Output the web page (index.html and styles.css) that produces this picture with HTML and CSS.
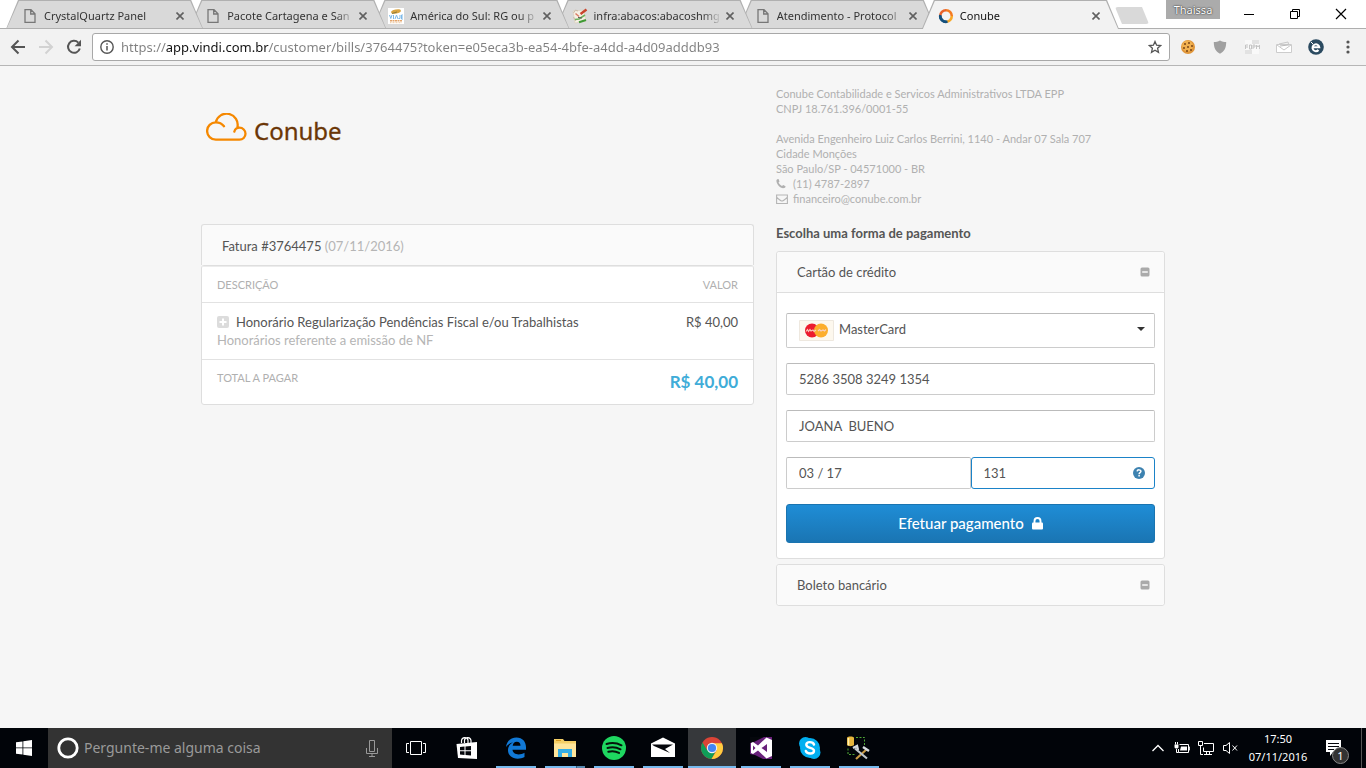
FILE: index.html
```html
<!DOCTYPE html>
<html lang="pt-BR">
<head>
<meta charset="utf-8">
<meta name="viewport" content="width=device-width, initial-scale=1">
<title>Conube</title>
<link rel="stylesheet" href="styles.css">
</head>
<body>
<svg class="sprite" aria-hidden="true">
  <symbol id="doc" viewBox="0 0 12 14"><path d="M1 .7h6l4 4v8.6H1zM6.700 1v4H11" fill="none" stroke="#777" stroke-width="1.300"/></symbol>
  <symbol id="close" viewBox="0 0 8 8"><path d="M.5.5l7 7M7.500.5l-7 7" fill="none" stroke="#606060" stroke-width="1.600"/></symbol>
  <symbol id="minus" viewBox="0 0 10 10"><rect x=".5" y=".5" width="9" height="9" rx="1.500" fill="#aaa"/><path d="M2.200 5h5.600" stroke="#fff" stroke-width="1.400"/></symbol>
</svg>

<header class="browser">
  <div class="strip">
    <nav class="tabs" aria-label="Abas">
      <div class="tab"><svg class="fav" aria-hidden="true"><use href="#doc"/></svg><span class="tab-title">CrystalQuartz Panel</span><button class="tab-close" aria-label="Fechar"><svg><use href="#close"/></svg></button></div>
      <div class="tab"><svg class="fav" aria-hidden="true"><use href="#doc"/></svg><span class="tab-title">Pacote Cartagena e San</span><button class="tab-close" aria-label="Fechar"><svg><use href="#close"/></svg></button></div>
      <div class="tab"><svg class="fav" viewBox="0 0 16 16" aria-hidden="true"><path fill="#fff" d="M0 0h16v16H0z"/><ellipse cx="8" cy="3.500" rx="5" ry="2" fill="#d9a441" transform="rotate(-12 8 3.500)"/><path d="M4 5.500l5-1.500" stroke="#8b7a3a"/><path d="M1.500 7l1.300 3.500L4 7M5.500 7v4M7 11l1.500-4L10 11M12 7v3.500h-1.500M15 7h-1.500v4H15M13.500 9H15" fill="none" stroke="#7db9e8"/><path d="M2 12.700h12" stroke="#e3a46a" stroke-width="1.500" stroke-dasharray="2 .5"/><path d="M2 14.700h12" stroke="#eec9a0" stroke-dasharray="1 .5"/></svg><span class="tab-title">América do Sul: RG ou p</span><button class="tab-close" aria-label="Fechar"><svg><use href="#close"/></svg></button></div>
      <div class="tab"><svg class="fav" viewBox="0 0 16 16" aria-hidden="true"><path fill="#f6f0e4" stroke="#d8cdb8" stroke-width=".6" d="M1 3l11-1 2 11-11 2z"/><path d="M1.500 5l2-3 2.500 1M1.500 9l2 4" fill="none" stroke="#cba"/><path d="M14.500 1.500L8.500 6" stroke="#c8442c" stroke-width="2.400"/><path d="M3.500 5.500l3.500 3" stroke="#d97a64" stroke-width="1.500"/><path d="M3 11.500l4-.5 6-4" fill="none" stroke="#6fb35f" stroke-width="1.600"/><path d="M7 14.300l7-2.300" stroke="#3f9a34" stroke-width="2"/><path d="M6 9.500l4 .5" stroke="#555"/></svg><span class="tab-title">infra:abacos:abacoshmg</span><button class="tab-close" aria-label="Fechar"><svg><use href="#close"/></svg></button></div>
      <div class="tab"><svg class="fav" aria-hidden="true"><use href="#doc"/></svg><span class="tab-title">Atendimento - Protocol</span><button class="tab-close" aria-label="Fechar"><svg><use href="#close"/></svg></button></div>
      <div class="tab tab-active"><svg class="fav" viewBox="0 0 16 16" aria-hidden="true"><g fill="none" stroke-width="2.600"><path d="M8 2.200a5.800 5.800 0 0 1 5.800 5.800" stroke="#f47b20"/><path d="M13.800 8A5.800 5.800 0 0 1 8 13.800" stroke="#f9a825"/><path d="M8 13.800A5.800 5.800 0 0 1 2.200 8" stroke="#14507d"/><path d="M2.200 8A5.800 5.800 0 0 1 8 2.200" stroke="#e8622a"/><path d="M2.300 7a5.800 5.800 0 0 0 7.200 6.600" stroke="#14507d"/></g></svg><span class="tab-title">Conube</span><button class="tab-close" aria-label="Fechar"><svg><use href="#close"/></svg></button></div>
    </nav>
    <button class="new-tab" aria-label="Nova aba"></button>
    <button class="profile">Thaissa</button>
    <div class="window-buttons">
      <button aria-label="Minimizar"><svg viewBox="0 0 12 12"><path d="M1 6.500h10" stroke="#000"/></svg></button>
      <button aria-label="Restaurar"><svg viewBox="0 0 12 12"><path d="M1.500 3.500h7v7h-7zM3.500 3.500v-2h7v7h-2" fill="none" stroke="#000"/></svg></button>
      <button aria-label="Fechar janela"><svg viewBox="0 0 12 12"><path d="M1 1l10 10M11 1L1 11" stroke="#000" stroke-width="1.200"/></svg></button>
    </div>
  </div>
  <div class="toolbar">
    <div class="nav-buttons">
      <button aria-label="Voltar"><svg viewBox="0 0 16 16"><path d="M15 8H2.500M8.500 1.500L2 8l6.500 6.500" fill="none" stroke="#555" stroke-width="2"/></svg></button>
      <button aria-label="Avançar"><svg viewBox="0 0 16 16"><path d="M1 8h12.500M7.500 1.500L14 8l-6.500 6.500" fill="none" stroke="#d2d2d2" stroke-width="2"/></svg></button>
      <button aria-label="Recarregar"><svg viewBox="0 0 16 16"><path d="M13.800 9.500A6 6 0 1 1 12.300 3.600" fill="none" stroke="#555" stroke-width="2"/><path d="M15 .8v6.400H8.600z" fill="#555"/></svg></button>
    </div>
    <div class="omnibox">
      <svg class="info" viewBox="0 0 14 14" aria-hidden="true"><circle cx="7" cy="7" r="6.200" fill="none" stroke="#555" stroke-width="1.400"/><path d="M7 6v4.500M7 3.300v1.500" stroke="#555" stroke-width="1.500"/></svg>
      <input class="url" type="text" aria-label="Endereço" value="https://app.vindi.com.br/customer/bills/3764475?token=e05eca3b-ea54-4bfe-a4dd-a4d09adddb93">
      <button class="star" aria-label="Favorito"><svg viewBox="0 0 14 14"><path d="M7 1.500l1.600 3.700 4 .4-3 2.700.9 4L7 10.200l-3.500 2.100.9-4-3-2.700 4-.4z" fill="none" stroke="#555" stroke-width="1.300"/></svg></button>
    </div>
    <div class="extensions">
      <button aria-label="Cookies"><svg viewBox="0 0 16 16"><circle cx="8" cy="8" r="7" fill="#e0963a"/><circle cx="7.500" cy="7" r="5.500" fill="#f0b050"/><g fill="#7a4416"><circle cx="5" cy="5" r="1"/><circle cx="9" cy="4" r="1"/><circle cx="12" cy="7" r="1"/><circle cx="8" cy="8" r="1"/><circle cx="4" cy="9" r="1"/><circle cx="7" cy="12" r="1"/><circle cx="11" cy="11" r="1"/></g></svg></button>
      <button aria-label="Proteção"><svg viewBox="0 0 16 16"><path d="M8 1.500c2 1.200 4 1.500 6.200 1.600C14.200 9 12.500 12.500 8 14.700 3.500 12.500 1.800 9 1.800 3.100 4 3 6 2.700 8 1.500z" fill="#a0a0a0"/></svg></button>
      <button aria-label="Formulário"><svg viewBox="0 0 16 16"><path fill="#f9f9f9" d="M1 1h14v14H1z"/><path fill="#e2e2e2" d="M8 1h7v4H8zM1 11h7v4H1z"/><path d="M1.500 10V6H4M1.500 8H4M5.500 6h2v4h-2zM9 10V6h2v2H9M12.500 10V6L14 8l1.500-2v4" fill="none" stroke="#c4c4c4"/></svg></button>
      <button aria-label="Correio"><svg viewBox="0 0 16 16"><path d="M.5 5.500h15v8H.5z" fill="#fff" stroke="#ccc"/><path d="M1 6l7 5 7-5M3 5l9-2 1 4" fill="none" stroke="#c8c8c8"/><path d="M4 7l8-1" stroke="#bbb"/></svg></button>
      <button aria-label="E"><svg viewBox="0 0 16 16"><circle cx="8" cy="8" r="7.800" fill="#2b4a60"/><path d="M4.500 8.300h6.800A3.400 3.400 0 1 0 10.500 11" fill="none" stroke="#fff" stroke-width="2"/><path d="M3 3l2 2" stroke="#fff"/></svg></button>
      <button aria-label="Menu"><svg viewBox="0 0 16 16" fill="#555"><circle cx="8" cy="3" r="1.600"/><circle cx="8" cy="8" r="1.600"/><circle cx="8" cy="13" r="1.600"/></svg></button>
    </div>
  </div>
</header>

<main class="page">
  <div class="layout">
    <section class="bill">
      <div class="logo">
        <svg viewBox="0 0 41 29" role="img" aria-label="Nuvem"><path d="M9.800 9.300A11 11 0 0 1 31.400 14.200M18 13.200C15.500 10 12.700 9.300 9.800 9.300A8.700 8.700 0 0 0 9.800 26.700H33.500a6 6 0 0 0 0-12c-2.500 0-4.500 1.400-5.200 4" fill="none" stroke="#f58800" stroke-width="2.300" stroke-linecap="round"/></svg>
        <span>Conube</span>
      </div>
      <table class="invoice">
        <caption>Fatura #3764475 <span class="muted">(07/11/2016)</span></caption>
        <thead><tr><th scope="col">DESCRIÇÃO</th><th scope="col">VALOR</th></tr></thead>
        <tbody><tr>
          <td><div class="item"><svg viewBox="0 0 12 12" aria-hidden="true"><rect width="12" height="12" rx="2" fill="#dcdcdc"/><path d="M2.500 6h7M6 2.500v7" stroke="#fff" stroke-width="2"/></svg>Honorário Regularização Pendências Fiscal e/ou Trabalhistas</div><div class="muted">Honorários referente a emissão de NF</div></td>
          <td>R$ 40,00</td>
        </tr></tbody>
        <tfoot><tr><th scope="row">TOTAL A PAGAR</th><td>R$ 40,00</td></tr></tfoot>
      </table>
    </section>

    <section class="payment">
      <address class="company">
        Conube Contabilidade e Servicos Administrativos LTDA EPP<br>CNPJ 18.761.396/0001-55<br><br>Avenida Engenheiro Luiz Carlos Berrini, 1140 - Andar 07 Sala 707<br>Cidade Monções<br>São Paulo/SP - 04571000 - BR
        <div class="contact"><svg viewBox="0 0 12 12" aria-hidden="true"><path d="M.5 2C1 1.100 2 .8 2.500 1L3.500 3.500 2.500 4.600c.7 1.500 1.900 2.700 3.500 3.500l1.200-1.100 2.300 1.300c.1.500-.4 1.500-1.200 1.800C4.300 11 -.2 6 .5 2z" fill="#b0b0b0"/></svg>(11) 4787-2897</div>
        <div class="contact"><svg viewBox="0 0 12 12" aria-hidden="true"><path d="M.6 2h10.800v8.500H.6zM.8 4.500C3 6.500 5 8 6 8s3-1.500 5.200-3.500" fill="none" stroke="#b5b5b5" stroke-width="1.100"/></svg>financeiro@conube.com.br</div>
      </address>
      <h1>Escolha uma forma de pagamento</h1>

      <div class="panel">
        <button class="panel-head" type="button" aria-expanded="true">Cartão de crédito<svg aria-hidden="true"><use href="#minus"/></svg></button>
        <form class="panel-body">
          <div class="brand">
            <select aria-label="Bandeira"><option>MasterCard</option></select>
            <svg class="brand-card" viewBox="0 0 35 21" aria-hidden="true"><path d="M.5.5h34v20H.5z" fill="#fdf8ee" stroke="#eee8df"/><circle cx="13" cy="10.500" r="7" fill="#ec1c2e"/><circle cx="22" cy="10.500" r="7" fill="#fcae2c"/><path d="M7 11.500l1.500-2 1 2 1.500-2 1 1.500 2-1 1 1.500 2-1.500M19 11l1.500-1.500 1.500 1.500 2-1 1.500 1 1.500-1.500" fill="none" stroke="#f8cfc0" stroke-width="1.100"/></svg>
            <svg class="caret" viewBox="0 0 8 4" aria-hidden="true"><path d="M0 0h8L4 4z" fill="#333"/></svg>
          </div>
          <input class="field" type="text" aria-label="Número do cartão" value="5286 3508 3249 1354">
          <input class="field" type="text" aria-label="Nome no cartão" value="JOANA  BUENO">
          <div class="pair">
            <input class="field" type="text" aria-label="Validade" value="03 / 17">
            <div class="cvv">
              <input class="field field-focus" type="text" aria-label="Código de segurança" value="131">
              <svg viewBox="0 0 12 12" aria-hidden="true"><circle cx="6" cy="6" r="6" fill="#3d82b0"/><path d="M4.100 4.400C4.300 2.300 8 2.400 7.900 4.500 7.800 5.700 6.100 5.700 6.100 7.200M6.100 8.100v1.500" fill="none" stroke="#fff" stroke-width="1.500"/></svg>
            </div>
          </div>
          <button class="pay" type="button">Efetuar pagamento<svg viewBox="0 0 11 13" aria-hidden="true"><path d="M2.500 6V4a3 3 0 0 1 6 0v2" fill="none" stroke="#fff" stroke-width="1.900"/><rect y="5.500" width="11" height="7" rx="1" fill="#fff"/></svg></button>
        </form>
      </div>
      <div class="panel">
        <button class="panel-head" type="button" aria-expanded="false">Boleto bancário<svg aria-hidden="true"><use href="#minus"/></svg></button>
      </div>
    </section>
  </div>
</main>

<footer class="taskbar">
  <button class="start" aria-label="Iniciar"><svg viewBox="0 0 16 16"><path fill="#fff" d="M0 2.300L6.500 1.400v6.100H0zM7.300 1.300L16 0v7.500H7.300zM0 8.300h6.500v6.300L0 13.700zM7.300 8.300H16V16l-8.700-1.300z"/></svg></button>
  <label class="search">
    <svg class="cortana" viewBox="0 0 22 22" aria-hidden="true"><circle cx="11" cy="11" r="9.200" fill="none" stroke="#fff" stroke-width="2.800"/></svg>
    <input type="text" aria-label="Pesquisar" placeholder="Pergunte-me alguma coisa">
    <svg class="mic" viewBox="0 0 12 17" aria-hidden="true"><path d="M3.500.5h5v11h-5zM.5 8v5.500h11V8M6 13.500v3M3 16.500h6" fill="none" stroke="#999"/></svg>
  </label>
  <button class="taskview" aria-label="Visão de tarefas"><svg viewBox="0 0 20 14"><path d="M4.500.5h11v13h-11zM3 2.500H.5v9H3M17 2.500h2.500v9H17" fill="none" stroke="#fff"/></svg></button>
  <nav class="apps" aria-label="Aplicativos">
    <button aria-label="Loja"><svg viewBox="0 0 24 24"><path d="M6.500 7V4.500C7 1 12 .5 13 4v3M9.500 7V4C10.500.5 15.500 1 16 4.500V7" fill="none" stroke="#fff" stroke-width="1.200"/><path d="M1.500 8L22 6v17L3 22z" fill="#fff"/><path fill="#05070c" d="M5 11l4.500-.4v3.700H5zM10.500 10.500L16 10v4.300h-5.500zM5 15.300h4.500V19L5 18.500zM10.500 15.300H16v4.300l-5.500-.5z"/></svg></button>
    <button class="running" aria-label="Edge"><svg viewBox="0 0 24 24"><path d="M2 11C3 4.500 7.500 1.500 12.500 1.500c6 0 9.500 4.300 9.500 9.700v2.600H8.500c.2 3.200 3 4.600 6 4.600 2.200 0 4.200-.6 6-1.700V21c-2 1.200-4.400 1.700-6.800 1.700C8 22.700 4 19.300 4 14.300c0-3.500 1.800-6.300 5-8C5.900 7 3.600 8.600 2 11zm6.700-1.300h7.800c0-2.500-1.300-3.900-3.700-3.900-2.300 0-3.700 1.600-4.100 3.900z" fill="#1179d6"/></svg></button>
    <button class="running stacked" aria-label="Explorador"><svg viewBox="0 0 24 24"><path d="M1 3h9l1.500 2H23v16H1z" fill="#f5cf66"/><path d="M1 7.500h22V21H1z" fill="#ffe59a"/><path d="M3 4.500h5" stroke="#d89b22"/><path d="M5 13h14v8h-4v-4H9v4H5z" fill="#35aee5"/></svg></button>
    <button class="running" aria-label="Spotify"><svg viewBox="0 0 24 24"><circle cx="12" cy="12" r="12" fill="#1ed760"/><path d="M4.500 8c5-1.500 10.500-1 15 1.300M5.500 12c4.500-1.300 9-.8 13 1.300M6.300 15.700c3.800-1 7.500-.6 10.700 1.200" fill="none" stroke="#05150b" stroke-width="2" stroke-linecap="round"/></svg></button>
    <button class="running" aria-label="E-mail"><svg viewBox="0 0 24 24"><path d="M0 7.500L12 1.500l12 6V21H0z" fill="#fff"/><path d="M1 8.500h21l-8 4.500 5 4L3 10z" fill="#05070c"/></svg></button>
    <button class="running current" aria-label="Chrome"><svg viewBox="0 0 24 24"><circle cx="12" cy="12" r="11" fill="#db4437"/><path d="M2.500 6.500A11 11 0 0 0 11.500 23l4.700-8.500L7 14z" fill="#0f9d58"/><path d="M11.500 23A11 11 0 0 0 21.900 7.200H12l4.800 7z" fill="#ffcd40"/><circle cx="12" cy="12" r="5.200" fill="#f1f1f1"/><circle cx="12" cy="12" r="4.100" fill="#4285f4"/></svg></button>
    <button class="running" aria-label="Visual Studio"><svg viewBox="0 0 24 24"><path d="M1 1h22v22H1z" fill="#68217a"/><path d="M1 1h14L5 6 1 7zM1 18l5 1 8 4H1z" fill="#05070c"/><path d="M17.500 1.500L23 4v16l-5.500 2.500L9 14.500 4 18l-2-1V7l2-1 5 3.500zM18 8l-5.500 4 5.500 4zM4 9.500v5L6.500 12z" fill="#fff" fill-rule="evenodd"/></svg></button>
    <button class="running" aria-label="Skype"><svg viewBox="0 0 24 24"><circle cx="7.500" cy="7.500" r="6.500" fill="#00aff0"/><circle cx="16" cy="16.500" r="6.500" fill="#00aff0"/><circle cx="12" cy="12" r="10" fill="#00aff0"/><path d="M16 8.500C15 5.500 8.500 5.200 8.300 8.700c-.1 3.800 7.700 2.500 7.700 6 0 3.700-7.300 3.500-8.200.2" fill="none" stroke="#fff" stroke-width="2.400" stroke-linecap="round"/></svg></button>
    <button class="running" aria-label="Ferramentas"><svg viewBox="0 0 24 24"><path d="M0 1.500C1 0 6 0 7 1.500V9c-1 1.500-6 1.500-7 0z" fill="#e6b53c"/><path d="M1.500 2v7.500" stroke="#fff0b0" stroke-width="1.500"/><path d="M9 1.500h8.500v8M1 12.500v6h7" fill="none" stroke="#4fa836" stroke-dasharray="2 1.500"/><path d="M20 13L9 23" stroke="#c99a45" stroke-width="2.200"/><path d="M8 12.500l12 10" stroke="#bfc6cc" stroke-width="2.200"/><path d="M6 12l4-2 1 4M16 11l6 4" fill="none" stroke="#d5dade" stroke-width="2.400"/></svg></button>
  </nav>
  <div class="tray">
    <button aria-label="Ícones ocultos"><svg viewBox="0 0 16 16"><path d="M2.500 11L8 5.500l5.500 5.500" fill="none" stroke="#fff" stroke-width="1.300"/></svg></button>
    <button aria-label="Bateria"><svg viewBox="0 0 16 16"><path d="M5.500 4.500h9v8h-10V9M14.500 7h1.200v3h-1.200M2.500 9v3.500h2M1.500 2v2.500M3.500 2v2.500" fill="none" stroke="#fff"/><path d="M.5 4.500h4v3l-1 1h-2l-1-1zM7 6.500h6v4H6z" fill="#fff"/></svg></button>
    <button aria-label="Rede"><svg viewBox="0 0 16 16"><path d="M6 3.500h9.500v8h-10v-4M8.500 11.500v3M11.500 11.500v3M6 14.500h8M.5 1.500h4v4h-4zM2.500 5.500v9H5" fill="none" stroke="#fff"/></svg></button>
    <button aria-label="Volume"><svg viewBox="0 0 16 16"><path d="M1.500 5.500H4L7.500 2.500v11L4 10.500H1.500zM10.500 5.500l4.500 5M15 5.500l-4.500 5" fill="none" stroke="#fff"/></svg></button>
    <time class="clock" datetime="2016-11-07T17:50">17:50<br>07/11/2016</time>
    <button class="notify" aria-label="Notificações"><svg viewBox="0 0 18 18"><path d="M1 1h15v12H8l-3 4v-4H1z" fill="#fff"/><path d="M3 4.500h11M3 7.500h11M3 10.500h6" stroke="#05070c"/></svg><span class="badge">1</span></button>
  </div>
</footer>
</body>
</html>
```
FILE: styles.css
```css
* { box-sizing: border-box; }

body {
  margin: 0;
  min-height: 100vh;
  display: flex;
  flex-direction: column;
  background: #f6f6f6;
  color: #555;
  font: 13px/18px Lato, "Liberation Sans", sans-serif;
}

button, input, select { font: inherit; color: inherit; }
button { margin: 0; padding: 0; border: 0; background: none; cursor: pointer; }
svg { display: block; flex: none; }
.sprite { position: absolute; width: 0; height: 0; }
.muted { color: #b5b5b5; }

/* Browser window */
.browser { font-family: "Noto Sans", "Open Sans", sans-serif; }
.strip {
  display: flex;
  height: 29px;
  padding: 0 2px 0 6px;
  background: linear-gradient(#fff 28px, #aeaeae 28px);
}
.tabs { display: flex; flex: 0 1 1113px; min-width: 0; }
.tab {
  position: relative;
  z-index: 0;
  flex: 1 1 0;
  min-width: 0;
  display: flex;
  align-items: center;
  height: 29px;
  margin-right: -14px;
  padding: 2px 19px 0 16px;
  font-size: 11px;
  color: #333;
}
.tab:nth-child(1) { z-index: 6; }
.tab:nth-child(2) { z-index: 5; }
.tab:nth-child(3) { z-index: 4; }
.tab:nth-child(4) { z-index: 3; }
.tab:nth-child(5) { z-index: 2; }
.tab::before, .tab::after {
  content: "";
  position: absolute;
  z-index: -2;
  inset: 0;
  background: #b0b0b0;
  clip-path: polygon(0 100%, 12px 0, calc(100% - 12px) 0, 100% 100%);
}
.tab::after { z-index: -1; inset: 1px 1px 1px 1px; background: #d9d9d9; }
.tab:last-child { z-index: 7; margin-right: 0; color: #111; }
.tab-active::after { bottom: 0; background: #f2f2f2; }
.fav { width: 16px; height: 16px; }
.fav:has(use) { height: 14px; }
.tab-title {
  flex: 1;
  min-width: 0;
  margin: 0 4px 0 6px;
  overflow: hidden;
  white-space: nowrap;
  mask-image: linear-gradient(to left, transparent, #000 20px);
}
.tab-close svg { width: 8px; height: 8px; }
.new-tab {
  width: 34px;
  height: 17px;
  margin: 7px 0 0 -4px;
  background: #d9d9d9;
  border-radius: 3px;
  clip-path: polygon(0 0, 27px 0, 100% 100%, 7px 100%);
}
.profile {
  width: 54px;
  height: 19px;
  margin-left: auto;
  background: #ababab;
  color: #fff;
  font-size: 11px;
  line-height: 18px;
  text-shadow: 0 0 2px #333, 0 0 1px #333;
}
.window-buttons { display: flex; margin-left: 6px; }
.window-buttons button { width: 46px; height: 27px; display: grid; place-items: center; }
.window-buttons svg { width: 12px; height: 12px; }
.toolbar {
  display: flex;
  align-items: center;
  height: 37px;
  padding: 0 2px 1px 4px;
  background: #f2f2f2;
  border-bottom: 1px solid #b6b6b6;
}
.nav-buttons { display: flex; margin-right: 4px; }
.nav-buttons button { width: 28px; height: 28px; display: grid; place-items: center; }
.nav-buttons svg { width: 16px; height: 16px; }
.omnibox {
  flex: 1;
  min-width: 0;
  display: flex;
  align-items: center;
  height: 28px;
  padding: 0 7px;
  background: #fff;
  border: 1px solid #a8a8a8;
  border-radius: 3px;
}
.info { width: 14px; height: 14px; margin-right: 7px; }
.url {
  flex: 1;
  min-width: 0;
  height: 24px;
  padding: 0;
  border: 0;
  outline: 0;
  font-size: 13px;
  background: linear-gradient(90deg, #808080 45px, #111 45px, #111 148px, #808080 148px);
  background-clip: text;
  -webkit-text-fill-color: transparent;
}
.star svg { width: 14px; height: 14px; }
.extensions { display: flex; margin-left: 2px; }
.extensions button { width: 32px; height: 28px; display: grid; place-items: center; }
.extensions svg { width: 16px; height: 16px; }

/* Page */
.page { flex: 1; padding: 20px 16px; }
.layout {
  display: grid;
  grid-template-columns: 553fr 389fr;
  gap: 22px;
  align-items: start;
  max-width: 964px;
  margin: 0 auto;
}
.logo {
  display: flex;
  align-items: flex-start;
  gap: 7px;
  height: 138px;
  padding: 27px 5px 0;
  color: #6b3606;
  font: 400 24px/36px "Noto Sans", sans-serif;
  -webkit-text-stroke: 0.3px #6b3606;
}
.logo svg { width: 41px; height: 29px; }

.invoice {
  width: 100%;
  border: 1px solid #dedede;
  border-radius: 3px;
  border-spacing: 0;
  background: #fff;
}
.invoice caption {
  height: 41px;
  padding: 12px 20px 10px;
  border: 1px solid #dedede;
  border-bottom: 0;
  border-radius: 3px 3px 0 0;
  background: #fafafa;
  text-align: left;
}
.invoice th, .invoice td {
  padding: 10px 15px;
  border-bottom: 1px solid #e2e2e2;
  text-align: left;
  vertical-align: top;
}
.invoice tr > :last-child { text-align: right; }
.invoice th { color: #b0b0b0; font-size: 11px; font-weight: 400; line-height: 16px; }
.invoice thead th { padding-bottom: 9px; border-top: 1px solid #ececec; }
.invoice tfoot th, .invoice tfoot td { border-bottom: 0; }
.invoice tfoot td {
  padding-bottom: 10px;
  color: #40acd8;
  font-size: 17px;
  font-weight: 700;
  line-height: 24px;
}
.item { display: flex; align-items: center; gap: 7px; }
.item svg { width: 12px; height: 12px; }

.company { color: #b0b0b0; font-size: 11px; font-style: normal; line-height: 15px; }
.contact { display: flex; align-items: center; gap: 5px; }
.contact svg { width: 12px; height: 12px; }
.payment h1 { margin: 18px 0 9px; font-size: 13px; font-weight: 700; line-height: 18px; }
.panel {
  margin-bottom: 5px;
  border: 1px solid #dedede;
  border-radius: 3px;
  background: #fff;
}
.panel-head {
  display: flex;
  align-items: center;
  justify-content: space-between;
  width: 100%;
  height: 40px;
  padding: 0 14px 0 20px;
  border-radius: 3px;
  background: #fafafa;
}
.panel-head svg { width: 10px; height: 10px; }
.panel-body {
  display: grid;
  gap: 15px;
  padding: 20px 9px 15px;
  border-top: 1px solid #dedede;
}
.brand, .cvv { position: relative; }
.brand select, .field {
  display: block;
  width: 100%;
  min-width: 0;
  height: 32px;
  padding: 0 12px;
  border: 1px solid #ccc;
  border-top-color: #bbb;
  border-radius: 2px;
  background: #fff;
  outline: 0;
  white-space: pre;
}
.brand select { height: 35px; padding: 0 30px 4px 52px; appearance: none; }
.brand-card { position: absolute; left: 13px; top: 7px; width: 35px; height: 21px; }
.caret { position: absolute; right: 10px; top: 14px; width: 8px; height: 4px; }
.pair { display: grid; grid-template-columns: 1fr 1fr; }
.cvv .field { border-color: #1b83c8; border-radius: 3px; }
.cvv svg { position: absolute; right: 10px; top: 10px; width: 12px; height: 12px; }
.pay {
  display: flex;
  align-items: center;
  justify-content: center;
  gap: 8px;
  height: 39px;
  padding-bottom: 1px;
  border: 1px solid #1a74b0;
  border-radius: 3px;
  background: linear-gradient(#1f8dd6, #1a75b3);
  color: #fff;
  font-size: 15px;
  font-weight: 500;
}
.pay svg { width: 11px; height: 13px; }

/* Taskbar */
.taskbar {
  display: flex;
  height: 40px;
  background: #010409;
  color: #fff;
  font-family: "Noto Sans", "Open Sans", sans-serif;
}
.taskbar button { display: grid; place-items: center; }
.start { width: 48px; }
.start svg { width: 16px; height: 16px; }
.search {
  display: flex;
  align-items: center;
  flex: 0 1 344px;
  min-width: 0;
  padding: 0 14px 0 9px;
  background: #333;
}
.search input {
  flex: 1;
  min-width: 0;
  padding: 0 0 0 5px;
  border: 0;
  outline: 0;
  background: none;
  font-size: 14px;
}
.search input::placeholder { color: #9a9a9a; opacity: 1; }
.cortana { width: 22px; height: 22px; }
.mic { width: 12px; height: 17px; }
.taskview { width: 48px; }
.taskview svg { width: 20px; height: 14px; }
.apps { display: flex; gap: 1px; margin-left: 3px; }
.apps button { width: 48px; }
.apps svg { width: 24px; height: 24px; }
.running { background: linear-gradient(#76b9ed, #76b9ed) center bottom / 40px 2px no-repeat; }
.running.stacked { background-image: linear-gradient(90deg, #76b9ed 31px, #3a5f7d 31px, #3a5f7d 32px, #5689b0 32px); }
.running.current { background-color: #36383b; background-size: 48px 2px; }
.tray { display: flex; align-items: center; margin-left: auto; padding-right: 4px; }
.tray button { width: 24px; height: 40px; }
.tray svg { width: 16px; height: 16px; }
.clock { width: 72px; font-size: 11px; line-height: 18px; text-align: center; }
.tray .notify { position: relative; width: 48px; padding-right: 8px; border-right: 1px solid #555; }
.tray .notify svg { width: 18px; height: 18px; }
.badge {
  position: absolute;
  right: 12px;
  bottom: 4px;
  width: 17px;
  height: 17px;
  border: 1px solid #888;
  border-radius: 50%;
  background: #333;
  font-size: 11px;
  line-height: 15px;
  text-align: center;
}
```
